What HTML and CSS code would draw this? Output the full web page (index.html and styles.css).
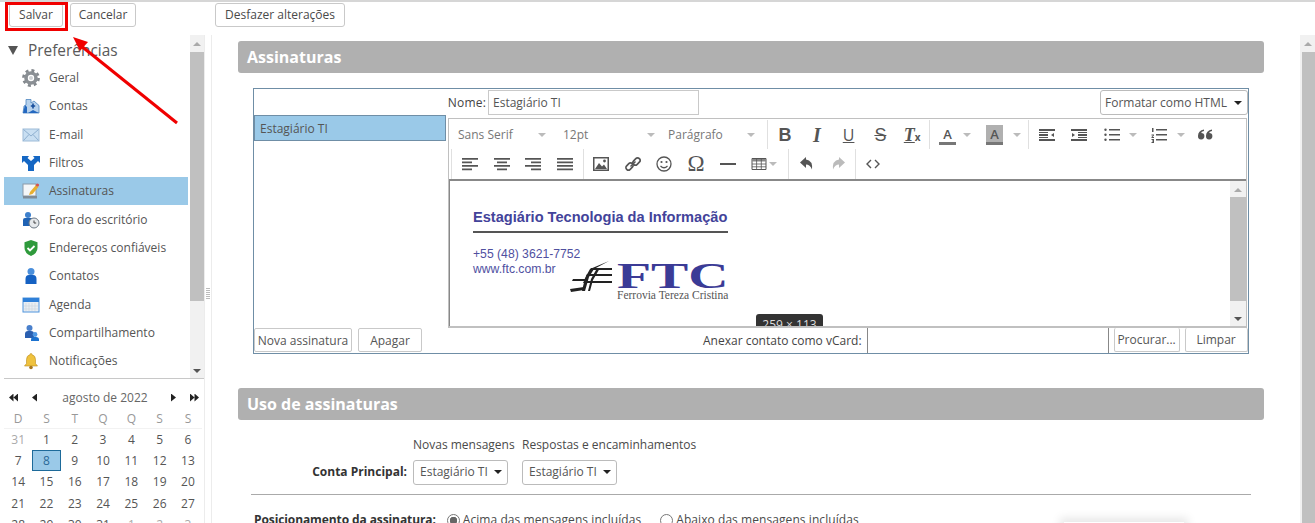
FILE: index.html
```html
<!DOCTYPE html>
<html lang="pt-BR">
<head>
<meta charset="utf-8">
<title>Preferências</title>
<link rel="stylesheet" href="styles.css">
</head>
<body>
<header class="topbar">
  <button class="btn btn-save">Salvar</button>
  <button class="btn btn-cancel">Cancelar</button>
  <button class="btn btn-undo">Desfazer alterações</button>
</header>
<div class="main">
  <aside class="side">
    <div class="side-top">
      <nav class="tree">
        <div class="tree-head"><span class="tri"></span><span>Preferências</span></div>
        <div class="tree-row"><svg class="ic" viewBox="0 0 18 18"><circle cx="9" cy="9" r="5" fill="none" stroke="#8a8f94" stroke-width="3.600"/><circle cx="9" cy="9" r="7.600" fill="none" stroke="#83888d" stroke-width="2.600" stroke-dasharray="3 3"/><circle cx="9" cy="9" r="2" fill="#cfd2d5"/></svg><span>Geral</span></div>
        <div class="tree-row"><svg class="ic" viewBox="0 0 18 18"><path d="M2 9l2-1V2.500h5V6l3-2 5 4.500V16H1z" fill="#b8d2ec" stroke="#4f86c0" stroke-width=".8"/><path d="M1 16l2-8 2 2v6zM17 16H6l5-3z" fill="#2468c0"/><path d="M11 6.500v5M8.800 9h4.400" stroke="#174e9c" stroke-width="1.600"/></svg><span>Contas</span></div>
        <div class="tree-row"><svg class="ic" viewBox="0 0 18 18"><rect x="1" y="3" width="16" height="12" fill="#c9dff2" stroke="#9dbbd8"/><path d="M1.500 3.500L9 10l7.500-6.500M1.500 14.500L7 8.500M16.500 14.500L11 8.500" fill="none" stroke="#8fb0d0"/></svg><span>E-mail</span></div>
        <div class="tree-row"><svg class="ic" viewBox="0 0 18 18"><path d="M0 2h7L5.500 4 9 7l3.500-3L11 2h7v7l-2-2-4 4v6H6v-6L2 7 0 9z" fill="#1467c4"/></svg><span>Filtros</span></div>
        <div class="tree-row active"><svg class="ic" viewBox="0 0 18 18"><rect x="1" y="2" width="13" height="12" fill="#f4f6f8" stroke="#8b9aa8"/><rect x="1" y="14" width="14" height="2.500" fill="#7f8b96"/><path d="M7 13l1-3 6-7 2.500 2-6 7z" fill="#e8b030"/><circle cx="15.500" cy="3" r="1.600" fill="#d8534f"/></svg><span>Assinaturas</span></div>
        <div class="tree-row"><svg class="ic" viewBox="0 0 18 18"><circle cx="6" cy="4" r="3" fill="#3e80cc"/><path d="M1 15V9q0-2 2-2h6q2 0 2 2v6z" fill="#1f62b4"/><circle cx="12" cy="12" r="5" fill="#e6e9ec" stroke="#6c7884"/><path d="M12 9.500V12h2.200" fill="none" stroke="#444"/></svg><span>Fora do escritório</span></div>
        <div class="tree-row"><svg class="ic" viewBox="0 0 18 18"><path d="M9 1l6.500 2.200V9q0 5-6.500 8Q2.500 14 2.500 9V3.200z" fill="#2f9a3c"/><path d="M5.500 9l2.500 2.500 4.500-4.500" fill="none" stroke="#fff" stroke-width="1.800"/></svg><span>Endereços confiáveis</span></div>
        <div class="tree-row"><svg class="ic" viewBox="0 0 18 18"><circle cx="9" cy="4.500" r="3.500" fill="#4a8fdc"/><path d="M3.500 17v-5q0-4 3.500-4h4q3.500 0 3.500 4v5z" fill="#1561c2"/></svg><span>Contatos</span></div>
        <div class="tree-row"><svg class="ic" viewBox="0 0 18 18"><rect x="1" y="2" width="16" height="14" fill="#e9eef3" stroke="#4f94dc"/><rect x="1" y="2" width="16" height="4" fill="#2f80d8"/><path d="M4 7v8M7 7v8M10 7v8M13 7v8M2 10h14M2 13h14" stroke="#cfd6dd" stroke-width=".7"/></svg><span>Agenda</span></div>
        <div class="tree-row"><svg class="ic" viewBox="0 0 18 18"><circle cx="7.500" cy="4" r="3" fill="#4a80cc"/><path d="M3 14v-4q0-3 3-3h3q3 0 3 3v4z" fill="#2a5fb0"/><circle cx="13" cy="10.500" r="2.400" fill="#4f98e4"/><path d="M9 17v-1.500q0-2.500 3-2.500h2q3 0 3 2.500V17z" fill="#1c72cf"/></svg><span>Compartilhamento</span></div>
        <div class="tree-row"><svg class="ic" viewBox="0 0 18 18"><path d="M9 1.500q1 0 1 1.200 3.500.8 3.500 5v3.800L15.500 14h-13l2-2.500V7.700q0-4.200 3.500-5 0-1.200 1-1.200z" fill="#efc23e" stroke="#b88a1e" stroke-width=".6"/><circle cx="9" cy="15.500" r="1.800" fill="#a8761c"/></svg><span>Notificações</span></div>
      </nav>
      <div class="vscroll side-scroll">
        <span class="arrow up"></span>
        <span class="thumb"></span>
        <span class="arrow down"></span>
      </div>
    </div>
    <section class="cal">
      <div class="cal-head">
        <span class="nav-set"><span class="dbl left"></span><span class="sgl left"></span></span>
        <span class="cal-title">agosto de 2022</span>
        <span class="nav-set"><span class="sgl right"></span><span class="dbl right"></span></span>
      </div>
      <div class="cal-grid dow"><span>D</span><span>S</span><span>T</span><span>Q</span><span>Q</span><span>S</span><span>S</span></div>
      <div class="cal-grid days">
        <span class="off">31</span><span>1</span><span>2</span><span>3</span><span>4</span><span>5</span><span>6</span>
        <span>7</span><span class="today">8</span><span>9</span><span>10</span><span>11</span><span>12</span><span>13</span>
        <span>14</span><span>15</span><span>16</span><span>17</span><span>18</span><span>19</span><span>20</span>
        <span>21</span><span>22</span><span>23</span><span>24</span><span>25</span><span>26</span><span>27</span>
        <span>28</span><span>29</span><span>30</span><span>31</span><span class="off">1</span><span class="off">2</span><span class="off">3</span>
      </div>
    </section>
  </aside>
  <div class="splitter"><span class="grip"></span></div>
  <main class="content">
    <div class="panel">
      <h2 class="sec-title">Assinaturas</h2>
      <div class="sig-box">
        <div class="sig-list">
          <div class="sig-list-space"></div>
          <div class="sig-item">Estagiário TI</div>
          <div class="sig-list-fill"></div>
          <div class="sig-actions">
            <button class="btn small btn-new">Nova assinatura</button>
            <button class="btn small btn-del">Apagar</button>
          </div>
        </div>
        <div class="sig-edit">
          <div class="name-row">
            <label class="name-label">Nome:</label>
            <span class="field name-field">Estagiário TI</span>
            <span class="select fmt">Formatar como HTML<span class="caret"></span></span>
          </div>
          <div class="editor">
            <div class="tb">
              <div class="tb-row first">
                <div class="tb-group fonts">
                  <span class="drop d1">Sans Serif<i class="mini"></i></span>
                  <span class="drop d2">12pt<i class="mini"></i></span>
                  <span class="drop d3">Parágrafo<i class="mini"></i></span>
                </div>
                <div class="tb-group g-format">
                  <span class="tool t-b">B</span>
                  <span class="tool t-i">I</span>
                  <span class="tool t-u">U</span>
                  <span class="tool t-s">S</span>
                  <span class="tool t-x"><span class="t-i2">T</span><small>x</small></span>
                </div>
                <div class="tb-group g-color">
                  <span class="color"><b>A</b><i class="mini"></i></span>
                  <span class="color hl"><b>A</b><i class="mini"></i></span>
                </div>
                <div class="tb-group g-list">
                  <svg class="ti" viewBox="0 0 16 16"><path d="M0 2h16v2H0zM0 12h16v2H0zM0 7h9v2H0z" fill="#555"/><path d="M0 5h9v1H0zM0 10h9v1H0z" fill="#555"/><path d="M15 6v4l-3-2z" fill="#555"/></svg>
                  <svg class="ti indent2" viewBox="0 0 16 16"><path d="M0 2h16v2H0zM0 12h16v2H0zM7 7h9v2H7z" fill="#555"/><path d="M7 5h9v1H7zM7 10h9v1H7z" fill="#555"/><path d="M1 6v4l3-2z" fill="#555"/></svg>
                  <svg class="ti li bul" viewBox="0 0 16 16"><path d="M5 2h11v1.600H5zM5 7h11v1.600H5zM5 12h11v1.600H5z" fill="#555"/><circle cx="1.500" cy="2.800" r="1.200" fill="#555"/><circle cx="1.500" cy="7.800" r="1.200" fill="#555"/><circle cx="1.500" cy="12.800" r="1.200" fill="#555"/></svg><i class="mini m-bul"></i>
                  <svg class="ti li num" viewBox="0 0 16 16"><path d="M5 2h11v1.600H5zM5 7h11v1.600H5zM5 12h11v1.600H5z" fill="#555"/><path d="M1 1h1.500v4H1zM.5 7.500h2.500v1L1.500 10H3v1H.5v-1L2 8.500H.5zM.5 12H3v4H.5v-1H2v-.5H1v-1h1V13H.5z" fill="#555"/></svg><i class="mini m-num"></i>
                  <svg class="ti" viewBox="0 0 16 16"><path d="M7 2.500Q1 3.500 1 9a3.200 3.200 0 1 0 3.200-3q0-1.500 2.800-2zM15 2.500Q9 3.500 9 9a3.200 3.200 0 1 0 3.200-3q0-1.500 2.800-2z" fill="#555"/></svg>
                </div>
              </div>
              <div class="tb-row second">
                <div class="tb-group g-align">
                  <svg class="ti" viewBox="0 0 16 16"><path d="M0 2h16v1.800H0zM0 5.500h10v1.800H0zM0 9h16v1.800H0zM0 12.500h10v1.800H0z" fill="#555"/></svg>
                  <svg class="ti" viewBox="0 0 16 16"><path d="M0 2h16v1.800H0zM3 5.500h10v1.800H3zM0 9h16v1.800H0zM3 12.500h10v1.800H3z" fill="#555"/></svg>
                  <svg class="ti" viewBox="0 0 16 16"><path d="M0 2h16v1.800H0zM6 5.500h10v1.800H6zM0 9h16v1.800H0zM6 12.500h10v1.800H6z" fill="#555"/></svg>
                  <svg class="ti" viewBox="0 0 16 16"><path d="M0 2h16v1.800H0zM0 5.500h16v1.800H0zM0 9h16v1.800H0zM0 12.500h16v1.800H0z" fill="#555"/></svg>
                </div>
                <div class="tb-group g-insert">
                  <svg class="ti" viewBox="0 0 16 16"><path d="M0 1h16v14H0z" fill="#555"/><path d="M1.500 2.500h13v11h-13z" fill="#fff"/><path d="M2 13l4-6 3 3.500 2-2 3 4.500z" fill="#555"/><circle cx="11.500" cy="5" r="1.400" fill="#555"/></svg>
                  <svg class="ti" viewBox="0 0 16 16"><g fill="none" stroke="#555" stroke-width="1.700"><rect x="9" y="1.500" width="5" height="8" rx="2.500" transform="rotate(45 11.500 5.500)"/><rect x="2" y="6.500" width="5" height="8" rx="2.500" transform="rotate(45 4.500 10.500)"/></g><path d="M5.500 10.500l5-5" stroke="#555" stroke-width="1.500"/></svg>
                  <svg class="ti" viewBox="0 0 16 16"><circle cx="8" cy="8" r="7" fill="none" stroke="#555" stroke-width="1.300"/><circle cx="5.500" cy="6" r="1.100" fill="#555"/><circle cx="10.500" cy="6" r="1.100" fill="#555"/><path d="M4.500 10q3.500 3.500 7 0" fill="none" stroke="#555" stroke-width="1.200"/></svg>
                  <span class="tool omega">Ω</span>
                  <svg class="ti" viewBox="0 0 16 16"><path d="M0 7h16v2H0z" fill="#555"/></svg>
                  <svg class="ti" viewBox="0 0 16 16"><path d="M1 2.500h14v11H1z" fill="none" stroke="#555"/><path d="M1 3h14v2.500H1z" fill="#888"/><path d="M5.600 3v10M10.300 3v10M1 8h14M1 10.800h14" stroke="#555" stroke-width=".8"/></svg><i class="mini m-t"></i>
                </div>
                <div class="tb-group g-undo">
                  <svg class="ti" viewBox="0 0 16 16"><path d="M7 1L1 6.500 7 12V8.500q4 0 6 5 1-9-6-10z" fill="#555"/></svg>
                  <svg class="ti" viewBox="0 0 16 16"><path d="M9 1l6 5.500L9 12V8.500q-4 0-6 5-1-9 6-10z" fill="#bbb"/></svg>
                </div>
                <div class="tb-group g-code">
                  <svg class="ti" viewBox="0 0 16 16"><path d="M6 4L2 8l4 4M10 4l4 4-4 4" fill="none" stroke="#555" stroke-width="1.400"/></svg>
                </div>
              </div>
            </div>
            <div class="edit-area">
              <div class="doc">
                <div class="doc-title">Estagiário Tecnologia da Informação</div>
                <div class="doc-rule"></div>
                <div class="doc-body">
                  <div class="doc-contact">+55 (48) 3621-7752<br>www.ftc.com.br</div>
                  <div class="logo">
                    <svg class="logo-rail" viewBox="0 0 42 32"><path d="M39 0L24 8l-5 8-4 14h-3l3-13 5-9z" fill="#222"/><path d="M30 7l-4 2-5 9-3 12h2l3-11z" fill="#222"/><path d="M21 7h21v2H20zM17 13h25v2H16zM14 20h28v2H13zM3 18h14l-1 2H2zM0 28l14-2v3L1 31z" fill="#222"/></svg>
                    <div class="logo-text">
                      <div class="logo-ftc">FTC</div>
                      <div class="logo-sub">Ferrovia Tereza Cristina</div>
                    </div>
                  </div>
                </div>
              </div>
              <div class="vscroll edit-scroll">
                <span class="arrow up"></span>
                <span class="thumb"></span>
                <span class="arrow down"></span>
              </div>
              <div class="size-tip">259 × 113</div>
            </div>
          </div>
          <div class="vcard-row">
            <label>Anexar contato como vCard:</label>
            <span class="field vcard-field"></span>
            <button class="btn small btn-browse">Procurar...</button>
            <button class="btn small btn-clear">Limpar</button>
          </div>
        </div>
      </div>
      <h2 class="sec-title second">Uso de assinaturas</h2>
      <div class="usage">
        <div class="usage-grid">
          <span></span><span class="col-label">Novas mensagens</span><span class="col-label">Respostas e encaminhamentos</span>
          <strong class="row-label">Conta Principal:</strong>
          <span class="select acc">Estagiário TI<span class="caret"></span></span>
          <span class="select acc">Estagiário TI<span class="caret"></span></span>
        </div>
        <div class="usage-rule"></div>
        <div class="pos-row">
          <strong>Posicionamento da assinatura:</strong>
          <span class="radio on"></span><span class="r-text">Acima das mensagens incluídas</span>
          <span class="radio"></span><span class="r-text2">Abaixo das mensagens incluídas</span>
        </div>
      </div>
    </div>
    <div class="vscroll page-scroll">
      <span class="arrow up"></span>
      <span class="thumb"></span>
    </div>
  </main>
</div>
<div class="callout"></div>
<svg class="arrow-note" viewBox="0 0 1315 523"><path d="M177 123L80 45" stroke="#f00000" stroke-width="3" fill="none"/><path d="M73 37l15 5-8 9z" fill="#f00000"/></svg>
<div class="soft-shadow"></div>
</body>
</html>
```
FILE: styles.css
```css
* { box-sizing: border-box; }
html, body { margin: 0; height: 100%; }
body {
  height: 523px;
  overflow: hidden;
  background: #fff;
  color: #4a4a4a;
  font: 12px/16px "Open Sans", "Noto Sans", sans-serif;
  display: flex;
  flex-direction: column;
  border-top: 2px solid #d6d6d6;
}
button { font: inherit; color: inherit; }
.btn {
  background: #fff;
  border: 1px solid #c9c9c9;
  border-radius: 3px;
  padding: 0;
  height: 24px;
}
.topbar {
  flex: none;
  height: 33px;
  display: flex;
  align-items: flex-start;
  padding: 1px 0 0 9px;
}
.btn-save { width: 54px; }
.btn-cancel { width: 66px; margin-left: 7px; }
.btn-undo { width: 130px; margin-left: 79px; }

.main { flex: 1; min-height: 0; display: flex; }
.side { flex: none; width: 204px; padding-left: 4px; display: flex; flex-direction: column; }
.side-top { flex: none; height: 344px; display: flex; border-bottom: 1px solid #c8c8c8; }
.tree { width: 184px; }
.tree-head {
  height: 29px;
  display: flex;
  align-items: center;
  padding: 2px 0 0 4px;
  font-size: 15.400px;
  color: #5a5a5a;
}
.tri {
  width: 0; height: 0;
  border-left: 5px solid transparent;
  border-right: 5px solid transparent;
  border-top: 9px solid #555;
  margin-right: 10px;
}
.tree-row {
  height: 28.300px;
  display: flex;
  align-items: center;
  padding-left: 18px;
  gap: 9px;
  color: #555;
}
.tree-row.active { background: #9ac9e8; }
.ic { width: 18px; height: 18px; flex: none; }

.vscroll { background: #f1f1f1; }
.side-scroll {
  margin-left: 2px;
  width: 14px;
  display: flex;
  flex-direction: column;
  align-items: center;
}
.thumb { display: block; background: #c0c0c0; width: 100%; }
.side-scroll .thumb { flex: none; height: 249px; margin: 6px 0 0; }
.arrow { display: block; width: 0; height: 0; border-left: 4px solid transparent; border-right: 4px solid transparent; flex: none; }
.arrow.up { border-bottom: 4px solid #aaa; margin-top: 7px; }
.arrow.down { border-top: 4px solid #555; margin-top: auto; margin-bottom: 5px; }

.cal { flex: 1; padding-top: 7px; overflow: hidden; }
.cal-head { height: 23px; display: flex; align-items: center; justify-content: space-between; width: 195px; padding: 0 0 0 5px; color: #666; }
.nav-set { display: flex; align-items: center; gap: 14px; }
.dbl, .sgl { display: block; height: 8px; }
.sgl { width: 5px; }
.sgl.left { background: #222; clip-path: polygon(100% 0, 0 50%, 100% 100%); }
.sgl.right { background: #222; clip-path: polygon(0 0, 100% 50%, 0 100%); }
.dbl { width: 9px; background: #222; }
.dbl.left { clip-path: polygon(50% 0, 0 50%, 50% 100%, 50% 50%, 100% 0, 100% 100%, 50% 50%); }
.dbl.right { clip-path: polygon(0 0, 50% 50%, 50% 0, 100% 50%, 50% 100%, 50% 50%, 0 100%); }
.cal-title { flex: 1; text-align: center; padding-left: 2px; }
.cal-grid { display: grid; grid-template-columns: repeat(7, 28.300px); width: 198px; text-align: center; }
.dow { height: 20px; align-items: center; color: #999; border-bottom: 1px solid #f2f2f2; }
.days { grid-auto-rows: 21.300px; align-items: center; color: #555; }
.days span { line-height: 20px; }
.off { color: #aaa; }
.days .today { background: #9ac9e8; border: 1px solid #1d6a9a; color: #2a6a98; height: 21px; }

.splitter {
  flex: none;
  width: 8px;
  border-left: 1px solid #ececec;
  border-right: 1px solid #ececec;
  position: relative;
}
.grip { position: absolute; top: 253px; left: 1px; width: 4px; height: 12px; background: repeating-linear-gradient(#bbb 0 1px, #fff 1px 2px); }

.content { flex: 1; min-width: 0; display: flex; }
.panel { flex: none; width: 1088px; padding: 6px 0 0 26px; }
.page-scroll { flex: none; width: 15px; display: flex; flex-direction: column; align-items: center; }
.page-scroll .thumb { flex: 1; margin: 6px 0 0 2px; width: 13px; }
.sec-title {
  width: 1026px;
  height: 32px;
  margin: 0;
  background: #b0b0b0;
  border-radius: 3px;
  color: #fff;
  font-size: 16px;
  font-weight: 700;
  line-height: 33px;
  padding-left: 9px;
}
.sec-title.second { margin-top: 34px; }
.sig-box {
  width: 996px;
  height: 266px;
  margin: 15px 0 0 15px;
  border: 1px solid #6f8ea6;
  display: flex;
}
.sig-list { flex: none; width: 192px; display: flex; flex-direction: column; }
.sig-list-space { height: 26px; }
.sig-item {
  height: 26px;
  background: #9ac9e8;
  border: 1px solid #6f8ea6;
  padding-left: 5px;
  line-height: 25px;
  color: #555;
}
.sig-list-fill { flex: 1; }
.sig-actions { height: 25px; display: flex; gap: 6px; }
.small { height: 24px; border-radius: 2px; color: #555; padding-top: 1px; }
.btn-new { width: 98px; }
.btn-del { width: 64px; }

.sig-edit { flex: 1; min-width: 0; display: flex; flex-direction: column; }
.name-row { height: 28px; display: flex; align-items: center; padding: 1px 0; margin-left: -1px; }
.name-label { color: #444; width: 42px; text-align: right; margin-right: 2px; margin-left: -1px; letter-spacing: .2px; }
.field { display: block; border: 1px solid #c9c9c9; background: #fff; }
.name-field { width: 211px; height: 25px; line-height: 23px; padding-left: 4px; color: #555; }
.select {
  display: inline-flex;
  align-items: center;
  justify-content: space-between;
  height: 25px;
  border: 1px solid #bbb;
  border-radius: 3px;
  padding: 0 5px;
  background: #fff;
  color: #555;
  white-space: nowrap;
}
.fmt { width: 148px; margin-left: auto; padding-left: 4px; }
.caret { width: 0; height: 0; border-left: 4px solid transparent; border-right: 4px solid transparent; border-top: 4px solid #222; flex: none; }
.mini { display: inline-block; flex: none; width: 0; height: 0; border-left: 4.500px solid transparent; border-right: 4.500px solid transparent; border-top: 4px solid #bbb; }

.editor {
  flex: none;
  height: 210px;
  width: 799px;
  margin: 2px 0 0 2px;
  border: 1px solid #c0c0c0;
  border-bottom-width: 2px;
  display: flex;
  flex-direction: column;
}
.tb { flex: none; height: 62px; border-bottom: 2px solid #888; }
.tb-row { height: 30px; display: flex; align-items: stretch; }
.tb-row.first { padding-top: 1px; }
.tb-row.second { margin-left: 2px; border-left: 1px solid #e0e0e0; }
.tb-group { display: flex; align-items: center; border-right: 1px solid #e0e0e0; }
.tb-group:last-child { border-right: 0; }
.fonts { width: 319px; color: #777; padding-left: 9px; }
.drop { display: flex; align-items: center; justify-content: space-between; }
.d1 { width: 88px; margin-right: 17px; }
.d2 { width: 92px; margin-right: 13px; }
.d3 { width: 87px; }
.tool { display: inline-flex; align-items: center; justify-content: center; color: #555; }
.g-format { width: 162px; font-size: 18px; padding-left: 8px; gap: 13.800px; }
.t-b { font-weight: 700; font-family: "Liberation Sans", sans-serif; width: 18px; }
.t-i, .t-i2 { font-style: italic; font-weight: 700; font-family: "Liberation Serif", serif; }
.t-i { width: 18px; font-size: 20px; }
.t-u { text-decoration: underline; width: 18px; font-size: 16px; }
.t-s { text-decoration: line-through; width: 18px; font-size: 18px; font-family: "Liberation Sans", sans-serif; }
.t-x { width: 18px; }
.t-x small { font-size: 10px; margin-top: 5px; font-weight: 700; }
.t-x .t-i2 { text-decoration: underline; }
.g-color { width: 99px; padding-left: 9px; gap: 15px; }
.color { display: flex; align-items: center; gap: 7px; color: #555; }
.color.hl { gap: 10px; }
.color b {
  display: block;
  width: 17px;
  height: 20px;
  text-align: center;
  font-size: 13px;
  line-height: 19px;
  font-weight: 600;
  border-bottom: 3px solid #777;
}
.color.hl b { background: #b0b0b0; }
.g-list { padding-left: 10px; gap: 15px; }
.ti { width: 16px; height: 16px; flex: none; }
.indent2 { margin-left: 1px; }
.bul { margin-left: 2px; }
.g-list .li { margin-right: -6px; }
.g-list .num { margin-right: -5px; }
.m-bul { margin-right: -1px; }
.m-num { margin-right: -3px; }
.g-align { width: 132px; padding-left: 10px; gap: 15.700px; }
.g-insert { width: 205px; padding-left: 9px; gap: 15.700px; }
.omega { width: 18px; font-size: 23px; font-family: "Liberation Serif", serif; font-weight: 400; margin: 0 -1px; }
.m-t { margin-left: -14px; }
.g-undo { width: 67px; padding-left: 10px; gap: 15px; }
.g-code { padding-left: 9px; }

.edit-area { flex: 1; min-height: 0; display: flex; position: relative; overflow: hidden; border-left: 1px solid #888; }
.doc { flex: 1; font-family: "Liberation Sans", Arial, sans-serif; color: #43439a; padding: 27px 0 0 23px; }
.doc-title { font-size: 14.600px; font-weight: 700; line-height: 18px; width: 255px; white-space: nowrap; }
.doc-rule { width: 255px; height: 2px; background: #555; margin-top: 5px; }
.doc-body { display: flex; width: 255px; position: relative; height: 60px; margin-top: 14px; }
.doc-contact { font-size: 12.200px; line-height: 14.500px; flex: none; color: #50509f; }
.logo { position: absolute; left: 97px; top: 14px; display: flex; align-items: flex-start; }
.logo-rail { width: 42px; height: 32px; margin-right: 5px; }
.logo-text { width: 110px; }
.logo-ftc { font: 700 36px/26px "Liberation Serif", serif; height: 25px; margin-top: 2px; transform-origin: left; transform: scaleX(1.550); color: #3b3b96; }
.logo-sub { font: 400 11.500px/10px "Liberation Serif", serif; color: #555; white-space: nowrap; margin-top: 2px; }
.edit-scroll { flex: none; width: 16px; display: flex; flex-direction: column; align-items: center; }
.edit-scroll .thumb { height: 104px; margin: 5px 0 0; flex: none; }
.size-tip {
  position: absolute;
  left: 306px;
  bottom: -8px;
  width: 67px;
  height: 20px;
  background: #333;
  color: #ddd;
  border-radius: 3px 3px 0 0;
  text-align: center;
  font-size: 12px;
  line-height: 22px;
}
.vcard-row { flex: 1; display: flex; align-items: flex-start; }
.vcard-row label { margin-left: 257px; line-height: 26px; margin-right: 5px; white-space: nowrap; color: #444; }
.vcard-field { width: 242px; height: 25px; border-top: 0; border-left-color: #888; border-right-color: #888; border-bottom: 0; }
.btn-browse { width: 66px; margin-left: 5px; height: 24px; border-top: 0; }
.btn-clear { width: 63px; margin-left: 5px; height: 24px; border-top: 0; }

.usage { width: 1000px; margin-left: 13px; }
.usage-grid {
  display: grid;
  grid-template-columns: 156px 103px auto;
  justify-content: start;
  align-items: center;
  column-gap: 6px;
  padding-top: 16px;
  grid-template-rows: 17px 30px;
  row-gap: 4px;
}
.col-label { white-space: nowrap; }
.row-label { text-align: right; color: #333; }
.acc { width: 95px; height: 25px; justify-self: start; padding-left: 6px; }
.usage-rule { width: 1000px; height: 1px; background: #aaa; margin-top: 7px; }
.pos-row { display: flex; align-items: center; margin-left: 3px; margin-top: 17px; white-space: nowrap; }
.pos-row strong { color: #333; margin-right: 11px; letter-spacing: -.1px; }
.radio { width: 13px; height: 13px; border-radius: 50%; border: 1px solid #777; background: #fff; margin-right: 3px; }
.radio.on { background: radial-gradient(circle, #666 0 3.500px, #fff 4px); }
.r-text { margin-right: 19px; letter-spacing: .07px; }
.r-text2 { letter-spacing: .07px; }

.callout { position: absolute; left: 5px; top: 2px; width: 63px; height: 29px; border: 3px solid #f00000; }
.arrow-note { position: absolute; left: 0; top: 0; width: 1315px; height: 523px; pointer-events: none; }
.soft-shadow { position: absolute; left: 1064px; top: 522px; width: 120px; height: 4px; box-shadow: 0 0 10px 4px rgba(0,0,0,.1); }
```
